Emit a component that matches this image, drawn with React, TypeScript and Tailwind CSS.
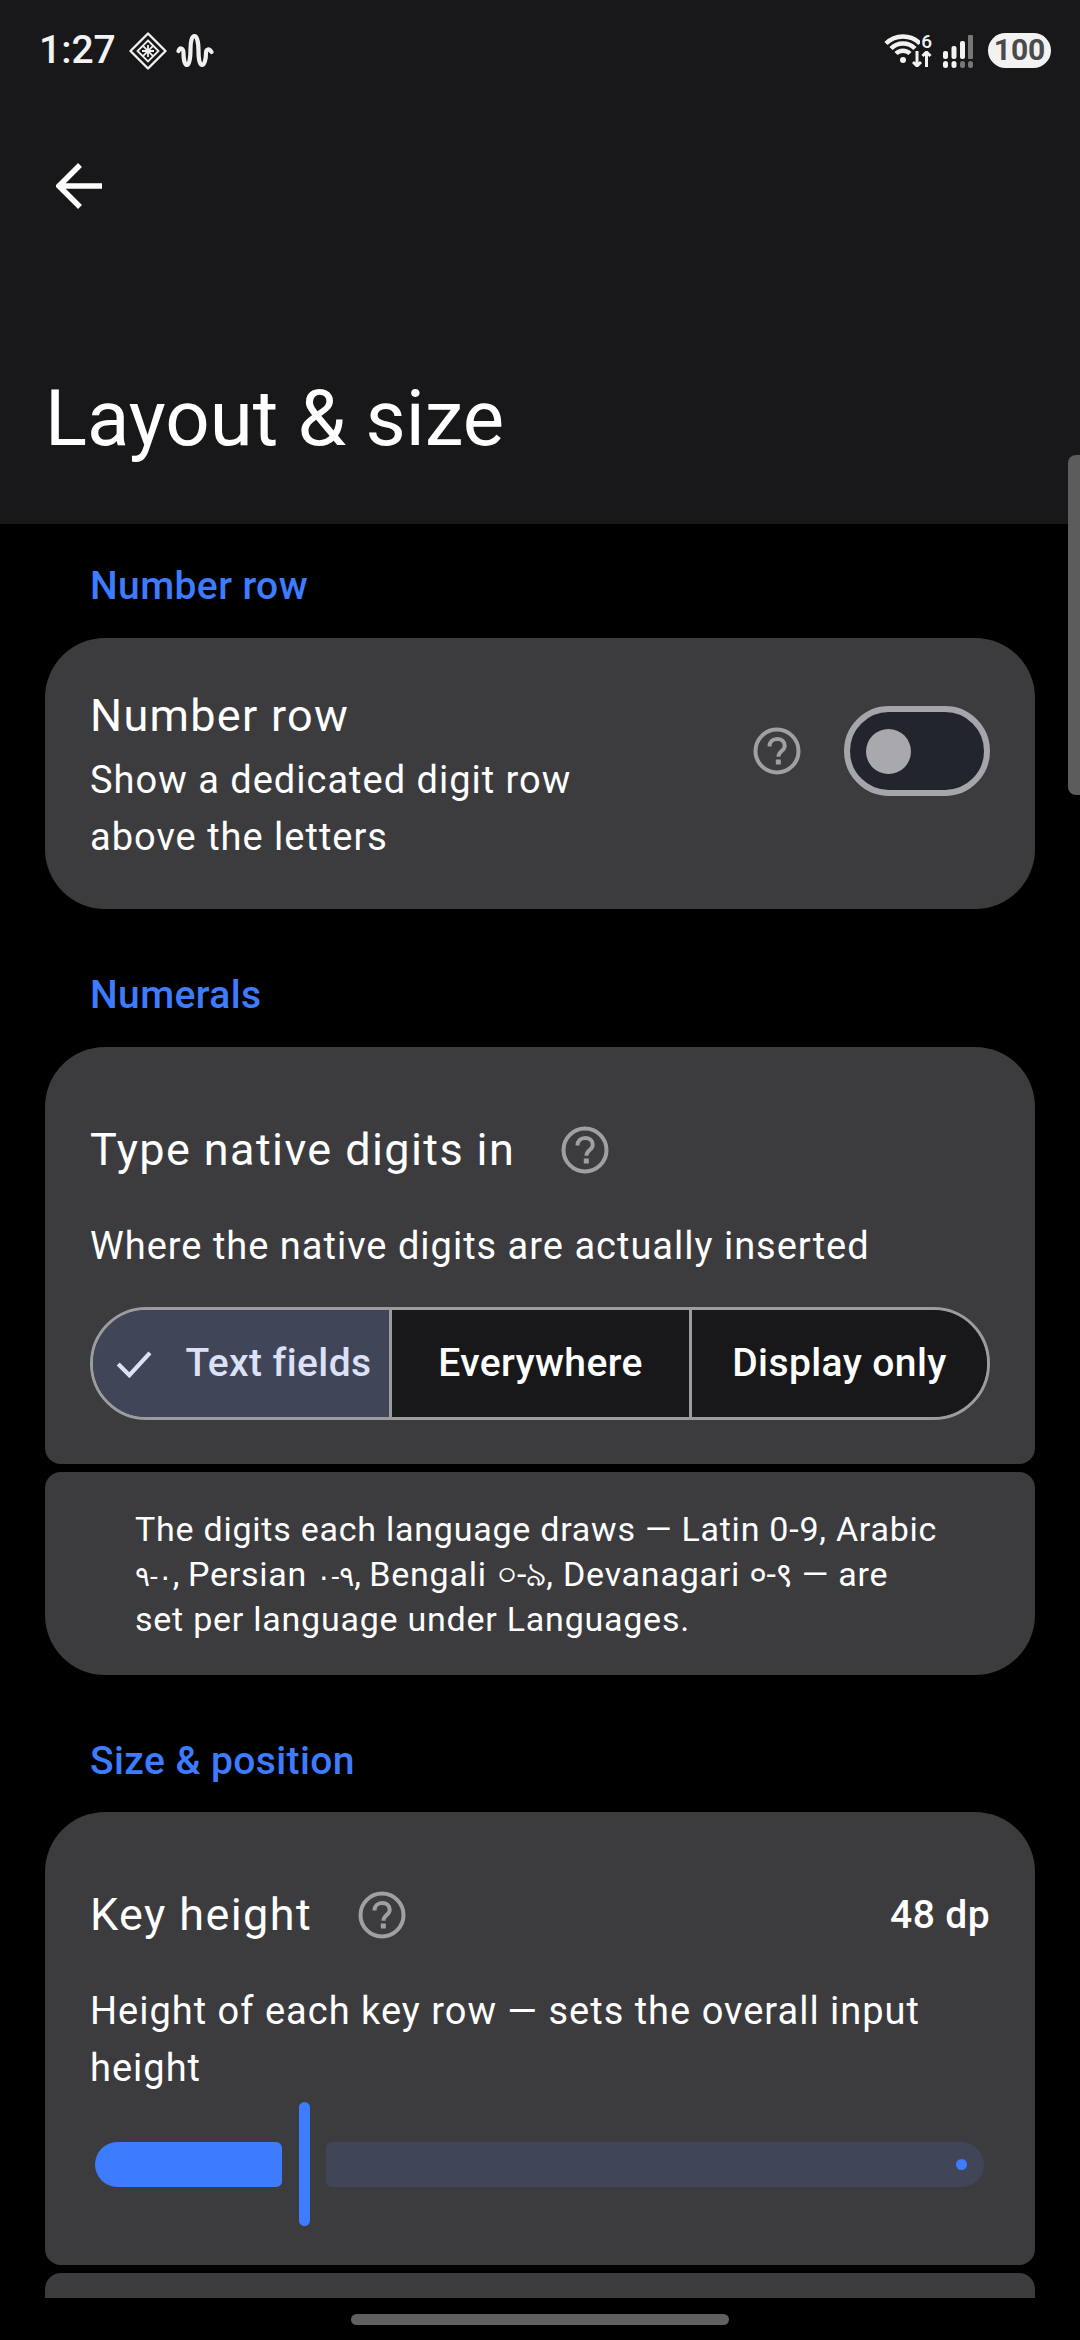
import React from "react";

const font = { fontFamily: "Roboto, 'Noto Sans', 'DejaVu Sans', sans-serif" };

function Help({ className = "" }: { className?: string }) {
  return (
    <svg viewBox="0 0 48 48" className={`w-[48px] h-[48px] shrink-0 ${className}`} fill="none">
      <circle cx="24" cy="24" r="21.5" stroke="#a0a0a4" strokeWidth="4" />
      <path d="M16.5 19.5c0-4.500 3.300-7.500 7.700-7.500 4.300 0 7.500 2.700 7.500 6.700 0 5.500-6.200 5.300-6.200 11" stroke="#a0a0a4" strokeWidth="4" />
      <rect x="22.800" y="32.500" width="5" height="5" fill="#a0a0a4" />
    </svg>
  );
}

function StatusLeft() {
  return (
    <div className="flex items-center">
      <span className="text-[39px] font-medium text-[#f2f2f2] leading-none">1:27</span>
      <svg viewBox="0 0 38 38" className="w-[38px] h-[38px] ml-[13px]" fill="none" stroke="#f0f0f0" strokeWidth="2.400">
        <path d="M19 1.500 36.500 19 19 36.500 1.500 19Z" strokeLinejoin="round" />
        <path d="M19 8.500 29.500 19 19 29.500 8.500 19Z M13.700 13.700 24.300 24.300 M24.300 13.700 13.700 24.300 M19 13v12 M13 19h12" strokeWidth="1.800" />
      </svg>
      <svg viewBox="0 0 38 36" className="w-[38px] h-[36px] ml-[9px]" fill="none" stroke="#f0f0f0" strokeWidth="4.200" strokeLinecap="round">
        <path d="M2.500 18c1.500-4 5-3 5 2 0 5 1 12 3.500 12s3.500-8 3.500-16 1.500-13 4-13 4 7 4 15 1 14 3.500 14 4-6 4-12c0-4 3-5 5.500-1" />
      </svg>
    </div>
  );
}

function StatusRight() {
  return (
    <div className="flex items-start">
      <svg viewBox="0 0 36 36" className="w-[36px] h-[36px]" fill="none" stroke="#f2f2f2" strokeWidth="4.500">
        <path d="M2 10.500a24 24 0 0 1 34 0" />
        <path d="M7 15.500a17 17 0 0 1 24 0" />
        <path d="M12 20.500a10 10 0 0 1 14 0" />
        <circle cx="19" cy="27" r="3" fill="#f2f2f2" stroke="none" />
      </svg>
      <div className="flex flex-col items-end -ml-[8px] w-[20px] relative">
        <span className="text-[19px] leading-[17px] font-medium text-[#f2f2f2]">6</span>
        <svg viewBox="0 0 20 16" className="w-[20px] h-[16px] mt-[1px]" fill="none" stroke="#f2f2f2" strokeWidth="3">
          <path d="M5 0v15M1 11l4 4 4-4" />
          <path d="M14.500 16V1M10.500 5l4-4 4 4" />
        </svg>
      </div>
      <svg viewBox="0 0 30 36" className="w-[30px] h-[36px] ml-[11px]">
        <rect x="0" y="18" width="5" height="8" rx="2" fill="#f2f2f2" />
        <rect x="0" y="28" width="5" height="7" rx="2.500" fill="#f2f2f2" />
        <rect x="8.500" y="13" width="5" height="13" rx="2" fill="#f2f2f2" />
        <rect x="8.500" y="28" width="5" height="7" rx="2.500" fill="#f2f2f2" />
        <rect x="17" y="8" width="5" height="18" rx="2" fill="#f2f2f2" />
        <rect x="17" y="28" width="5" height="7" rx="2.500" fill="#777" />
        <rect x="25" y="2" width="5" height="24" rx="1" fill="#777" />
        <rect x="25" y="28" width="5" height="7" rx="2.500" fill="#777" />
      </svg>
      <div className="ml-[15px] w-[63px] h-[35px] rounded-full bg-[#f2f2f2] flex items-center justify-center text-[30px] font-bold text-[#4a4a4c] leading-none">
        100
      </div>
    </div>
  );
}

function Label({ children, className = "" }: { children: React.ReactNode; className?: string }) {
  return (
    <div className={`pl-[90px] text-[39px] font-medium text-[#3d7bff] leading-[44px] ${className}`}>{children}</div>
  );
}

function Segment({ children, selected }: { children: React.ReactNode; selected?: boolean }) {
  return (
    <div
      className={`min-w-0 flex items-center justify-center text-[39px] font-medium ${
        selected ? "bg-[#414558] text-[#dce1f8] pl-[6px]" : "bg-[#18181a] text-white border-l-[3px] border-[#9c9c9f]"
      }`}
    >
      {selected && (
        <svg viewBox="0 0 40 30" className="w-[38px] h-[28px] mr-[31px]" fill="none" stroke="#dce1f8" strokeWidth="4.500">
          <path d="M2 15l12 12L36 3" />
        </svg>
      )}
      {children}
    </div>
  );
}

export default function App() {
  return (
    <div className="relative w-[1080px] h-[2340px] bg-black overflow-hidden flex flex-col" style={font}>
      <header className="h-[524px] shrink-0 bg-[#18181a] flex flex-col">
        <div className="h-[101px] pl-[39px] pr-[29px] flex items-center justify-between">
          <StatusLeft />
          <StatusRight />
        </div>
        <div className="mt-[45px] pl-[56px] h-[80px] flex items-center">
          <svg viewBox="0 0 46 46" className="w-[46px] h-[46px]" fill="none" stroke="white" strokeWidth="5.500">
            <path d="M46 23H4M24 2 3 23l21 21" />
          </svg>
        </div>
        <h1 className="mt-[151px] pl-[45px] text-[78px] leading-[84px] text-white font-normal">Layout &amp; size</h1>
      </header>

      <main className="h-[1774px] overflow-hidden flex flex-col tracking-[0.4px]">
        <Label className="mt-[40px]">Number row</Label>
        <section className="mt-[30px] mx-[45px] h-[271px] shrink-0 bg-[#3c3c3e] rounded-[60px] px-[45px] pt-[51px] flex items-start">
          <div className="flex-1 text-white">
            <div className="text-[45px] leading-[54px] tracking-[1.3px]">Number row</div>
            <div className="text-[38px] leading-[57px] mt-[9px] tracking-[1px]">
              Show a dedicated digit row
              <br />
              above the letters
            </div>
          </div>
          <Help className="mr-[43px] mt-[38px]" />
          <div className="mt-[17px] w-[146px] h-[90px] rounded-full border-[6px] border-[#a5a5aa] bg-[#22252e] flex items-center pl-[16px]">
            <div className="w-[45px] h-[45px] rounded-full bg-[#a9a8ad]" />
          </div>
        </section>

        <Label className="mt-[64px]">Numerals</Label>
        <section className="mt-[30px] mx-[45px] h-[417px] shrink-0 bg-[#3c3c3e] rounded-t-[60px] rounded-b-[16px] px-[45px] pt-[76px]">
          <div className="flex items-center text-[45px] leading-[54px] text-white tracking-[1.4px]">
            Type native digits in
            <Help className="ml-[46px]" />
          </div>
          <div className="mt-[45px] text-[38px] leading-[48px] text-white tracking-[1px]">
            Where the native digits are actually inserted
          </div>
          <div className="mt-[37px] h-[113px] grid grid-cols-[296px_300px_298px] rounded-full border-[3px] border-[#9c9c9f] overflow-hidden">
            <Segment selected>Text fields</Segment>
            <Segment>Everywhere</Segment>
            <Segment>Display only</Segment>
          </div>
        </section>
        <section className="mt-[8px] mx-[45px] h-[203px] shrink-0 bg-[#3c3c3e] rounded-t-[16px] rounded-b-[60px] pl-[90px] pr-[45px] pt-[35px] text-[34px] leading-[45px] text-white tracking-[0.76px]">
          <div className="h-[45px]">The digits each language draws — Latin 0-9, Arabic</div>
          <div className="h-[45px]">
            <span className="text-[28px] tracking-[-0.5px]">٠-٩</span>, Persian <span className="text-[28px] tracking-[-1px]">۰-۹</span>, Bengali <span className="tracking-[-1px]">০-৯</span>, Devanagari <span className="tracking-[-0.5px]">०-९</span> — are
          </div>
          <div className="h-[45px]">set per language under Languages.</div>
        </section>

        <Label className="mt-[64px]">Size &amp; position</Label>
        <section className="mt-[29px] mx-[45px] h-[453px] shrink-0 bg-[#3c3c3e] rounded-t-[60px] rounded-b-[16px] px-[45px] pt-[76px]">
          <div className="flex items-center text-[45px] leading-[54px] text-white tracking-[1.4px]">
            Key height
            <Help className="ml-[46px]" />
            <span className="ml-auto text-[39px] font-medium tracking-[0.4px]">48 dp</span>
          </div>
          <div className="mt-[41px] text-[38px] leading-[57px] text-white tracking-[1px]">
            Height of each key row — sets the overall input
            <br />
            height
          </div>
          <div className="mt-[5px] h-[124px] flex items-center pl-[5px] pr-[6px]">
            <div className="w-[187px] h-[45px] rounded-l-[23px] rounded-r-[6px] bg-[#3d7bff]" />
            <div className="ml-[17px] w-[11px] h-[124px] rounded-full bg-[#3d7bff]" />
            <div className="ml-[16px] flex-1 h-[45px] rounded-r-[23px] rounded-l-[6px] bg-[#414558] flex items-center justify-end pr-[17px]">
              <div className="w-[11px] h-[11px] rounded-full bg-[#3d7bff]" />
            </div>
          </div>
        </section>
        <section className="mt-[8px] mx-[45px] h-[200px] shrink-0 bg-[#3c3c3e] rounded-t-[16px]" />
      </main>

      <div className="flex-1 flex items-start justify-center pt-[16px]">
        <div className="w-[378px] h-[11px] rounded-full bg-[#606060]" />
      </div>

      <div className="absolute right-0 top-[455px] w-[12px] h-[340px] rounded-l-[8px] bg-[#5c5c5c]" />
    </div>
  );
}
